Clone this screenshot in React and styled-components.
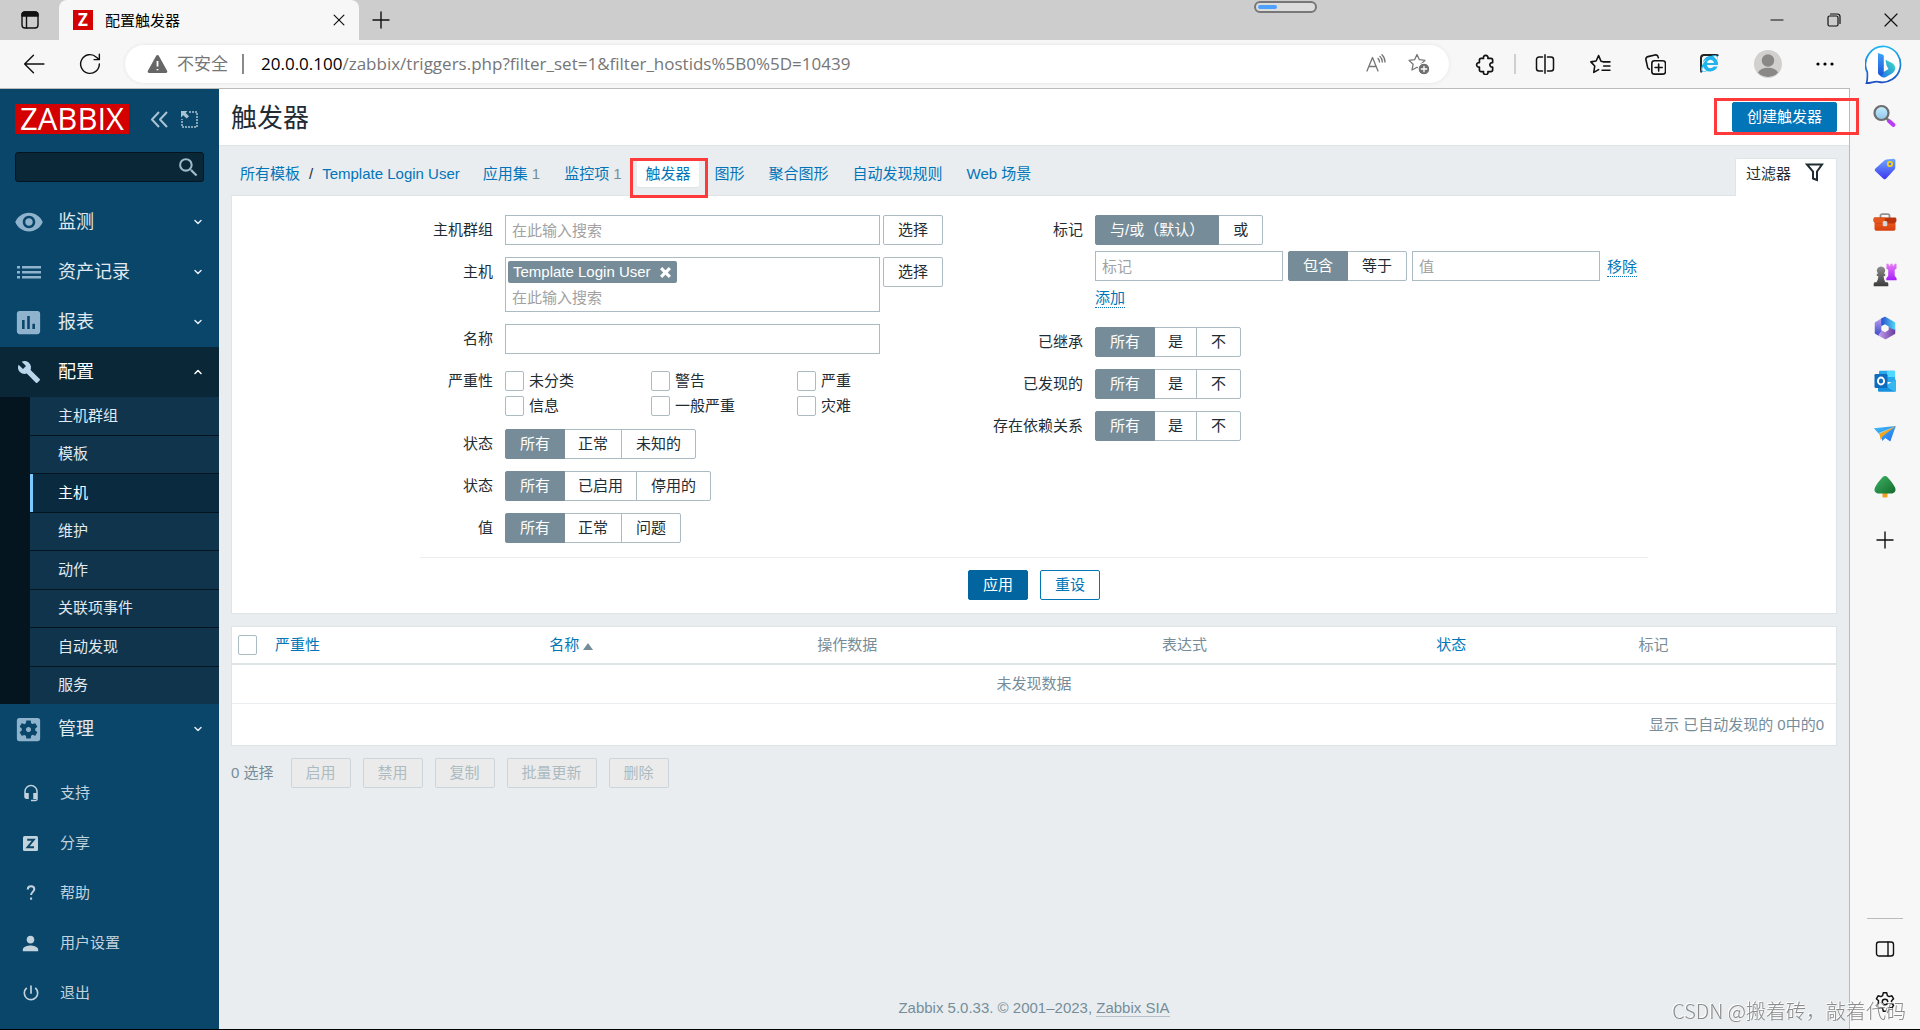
import React, { useState } from "react";
import styled, { createGlobalStyle, css } from "styled-components";
import {
  MdVisibility,
  MdBuild,
  MdAssessment,
  MdSettingsApplications,
  MdHeadsetMic,
  MdPerson,
  MdPowerSettingsNew,
  MdSearch,
} from "react-icons/md";
import { FaInternetExplorer } from "react-icons/fa";

const uiFont = `"Liberation Sans", Arial, "Noto Sans CJK SC", sans-serif`;
const chromeFont = `"Open Sans", "Noto Sans CJK SC", sans-serif`;

const color = {
  link: "#0275b8",
  text: "#1f2c33",
  grey: "#768d99",
  border: "#acbbc2",
  line: "#dfe4e7",
  page: "#e9edf0",
  side: "#0a466a",
  chrome: "#f7f7f7",
};

const Global = createGlobalStyle`
  *, *::before, *::after { box-sizing: border-box; }
  body { margin: 0; font: 15px/20px ${uiFont}; color: ${color.text}; background: ${color.page}; }
  button, input { font: inherit; color: inherit; margin: 0; }
  button { cursor: pointer; }
  a { color: ${color.link}; text-decoration: none; }
  ul { list-style: none; margin: 0; padding: 0; }
  svg { display: block; flex: none; }
`;

/* ---------- browser window ---------- */

const Window = styled.div`
  display: flex;
  flex-direction: column;
  min-height: 100vh;
  border-bottom: 1px solid #000;
`;

const TitleBar = styled.header`
  position: relative;
  display: flex;
  align-items: flex-end;
  height: 40px;
  background: #cdcdcd;
  font-family: ${chromeFont};
`;

const BareButton = styled.button`
  display: flex;
  align-items: center;
  justify-content: center;
  width: ${(p) => p.$w || 32}px;
  height: ${(p) => p.$h || 32}px;
  padding: 0;
  border: 0;
  background: none;
  color: ${(p) => p.$color || "#111"};
`;

const BrowserTab = styled.div`
  display: flex;
  align-items: center;
  gap: 12px;
  width: 300px;
  height: 40px;
  padding: 0 4px 0 14px;
  border-radius: 8px 8px 0 0;
  background: ${color.chrome};
  color: #000;
`;

const TabTitle = styled.span`
  flex: 1;
`;

const Favicon = styled.span`
  display: flex;
  align-items: center;
  justify-content: center;
  width: 20px;
  height: 20px;
  background: #d40000;
  color: #fff;
  font: bold 17px/20px "Open Sans", sans-serif;
`;

const WindowButtons = styled.div`
  display: flex;
  margin-left: auto;
`;

const LoadPill = styled.div`
  position: absolute;
  top: 1px;
  left: 1254px;
  width: 63px;
  height: 12px;
  padding: 2px;
  border: 2px solid #777;
  border-radius: 6px;
  background: #dcdcdc;

  &::before {
    content: "";
    display: block;
    width: 19px;
    height: 4px;
    border-radius: 2px;
    background: #4ea1ff;
  }
`;

const WindowBody = styled.div`
  display: flex;
  flex: 1;
`;

const Browser = styled.div`
  display: flex;
  flex-direction: column;
  flex: 1;
  min-width: 0;
`;

const Toolbar = styled.div`
  display: flex;
  align-items: center;
  height: 48px;
  padding-left: 18px;
  background: ${color.chrome};
  font-family: ${chromeFont};
`;

const AddressBar = styled.div`
  display: flex;
  align-items: center;
  flex: 1;
  height: 38px;
  margin: 0 20px 0 19px;
  padding: 0 12px 0 22px;
  border-radius: 19px;
  background: #fff;
  box-shadow: 0 0 4px rgba(0, 0, 0, 0.08);
  font-size: 17px;
  color: #767676;
`;

const Warning = styled.span`
  display: flex;
  align-items: center;
  gap: 9px;
  padding-right: 14px;
  margin-right: 17px;
  border-right: 2px solid #8a8a8a;
  font-size: 17px;
  line-height: 20px;
`;

const Url = styled.span`
  flex: 1;
  b {
    font-weight: 400;
    color: #000;
  }
`;

const ToolGroup = styled.div`
  display: flex;
  align-items: center;
  gap: ${(p) => p.$gap || 0}px;
`;

const ToolSeparator = styled.i`
  width: 2px;
  height: 20px;
  margin-left: 13px;
  background: #cfcfcf;
`;

const PageArea = styled.div`
  display: flex;
  flex: 1;
  border-top: 1px solid #bbb;
  border-right: 1px solid #bbb;
`;

const Rail = styled.aside`
  display: flex;
  flex-direction: column;
  align-items: center;
  width: 70px;
  padding-bottom: 1px;
  background: ${color.chrome};
`;

const RailButton = styled(BareButton)`
  width: 48px;
  height: 53px;
`;

const BingButton = styled(BareButton)`
  width: 48px;
  height: 49px;
`;

const RailFoot = styled.div`
  display: flex;
  flex-direction: column;
  align-items: center;
  margin-top: auto;
  padding-top: 3px;
  border-top: 1px solid #bbb;
  width: 36px;
`;

/* ---------- side menu ---------- */

const SideMenu = styled.nav`
  display: flex;
  flex-direction: column;
  width: 219px;
  background: ${color.side};
  color: #e0eaf0;
`;

const Brand = styled.div`
  display: flex;
  align-items: center;
  padding: 15px 0 0 15px;
  color: #a9c3d3;
`;

const Logo = styled.a`
  display: block;
  width: 114px;
  height: 30px;
  margin-right: 19px;
  background: #d40000;
  color: #fff;
  font: 31px/29px "Open Sans", sans-serif;
  text-align: center;
`;

const SideSearch = styled.label`
  display: flex;
  align-items: center;
  height: 30px;
  margin: 18px 15px 15px;
  padding-right: 2px;
  border: 1px solid #04151f;
  border-radius: 3px;
  background: #0a2737;
  color: #9db9ca;

  input {
    flex: 1;
    min-width: 0;
    padding: 0 8px;
    border: 0;
    outline: 0;
    background: none;
  }
`;

const MenuLink = styled.a`
  display: flex;
  align-items: center;
  gap: 14px;
  height: 50px;
  padding: 0 17px 0 13px;
  font-size: 18px;
  color: ${(p) => (p.$open ? "#fff" : "#e0eaf0")};
  background: ${(p) => (p.$open ? "#0a2737" : "transparent")};

  span {
    flex: 1;
  }
`;

const IconCell = styled.i`
  display: flex;
  align-items: center;
  justify-content: center;
  width: 31px;
  color: ${(p) => p.$color || "#8fb3cd"};
`;

const SubMenu = styled.ul`
  display: grid;
  grid-auto-rows: 1fr;
  height: 307px;
  border-left: 30px solid #04151f;
  background: #04151f;
  row-gap: 1px;
`;

const SubLink = styled.a`
  display: flex;
  align-items: center;
  height: 100%;
  padding-left: 25px;
  border-left: 3px solid ${(p) => (p.$current ? "#7cc9ff" : "#0f344c")};
  background: ${(p) => (p.$current ? "#0a2a3f" : "#0f344c")};
  color: ${(p) => (p.$current ? "#fff" : "#e0eaf0")};
`;

const UserMenu = styled.ul`
  margin-top: 14px;
`;

const UserLink = styled.a`
  display: flex;
  align-items: center;
  gap: 14px;
  height: 50px;
  padding-left: 15px;
  color: #c3d3dd;
`;

/* ---------- page ---------- */

const Main = styled.main`
  display: flex;
  flex-direction: column;
  flex: 1;
  min-width: 0;
  background: ${color.page};
`;

const PageHeader = styled.header`
  display: flex;
  align-items: center;
  justify-content: space-between;
  height: 57px;
  padding: 0 12px;
  border-bottom: 1px solid ${color.line};
  background: #fff;

  h1 {
    margin: 0;
    padding-top: 2px;
    font-size: 26px;
    font-weight: 400;
    line-height: 36px;
  }
`;

const Button = styled.button`
  height: 30px;
  padding: 0 14px;
  border: 1px solid ${color.link};
  border-radius: 2px;
  line-height: 26px;
  white-space: nowrap;
  background: #fff;
  color: ${color.link};

  ${(p) => p.$kind === "primary" && css`background: ${color.link}; color: #fff;`}
  ${(p) => p.$kind === "strong" && css`background: #02659f; border-color: #02659f; color: #fff;`}
  ${(p) => p.$kind === "grey" && css`border-color: ${color.border}; color: ${color.text};`}

  &:disabled {
    border-color: #ccd5d9;
    background: #ebebeb;
    color: #acbbc2;
    cursor: default;
  }
`;

const Marked = styled.div`
  position: relative;
  display: flex;

  &::after {
    content: "";
    position: absolute;
    z-index: 2;
    inset: ${(p) => p.$inset};
    border: 3px solid #ff3a3a;
    pointer-events: none;
  }
`;

const Content = styled.div`
  display: flex;
  flex-direction: column;
  flex: 1;
  padding: 12px;
`;

const NavRow = styled.div`
  display: flex;
  justify-content: space-between;
`;

const Crumbs = styled.nav`
  display: flex;
  align-items: center;
  height: 26px;
  margin-top: 3px;
  padding-left: 9px;
  gap: 9px;
`;

const Tabs = styled.ul`
  display: flex;
  margin-left: 6px;
  gap: 8px;
`;

const TabLink = styled.a`
  display: block;
  padding: 0 8px;
  border-radius: 2px;
  line-height: 26px;
  color: ${color.link};
  background: ${(p) => (p.$current ? "#fff" : "transparent")};
  box-shadow: ${(p) => (p.$current ? `0 1px 0 ${color.line}` : "none")};

  sup {
    padding-left: 4px;
    vertical-align: baseline;
    font-size: 15px;
    line-height: 20px;
    color: ${color.grey};
  }
`;

const FilterTab = styled.button`
  display: flex;
  align-items: flex-start;
  gap: 14px;
  height: 38px;
  margin-bottom: -1px;
  padding: 4px 12px 0 10px;
  border: 1px solid ${color.line};
  border-bottom: 0;
  border-radius: 2px 2px 0 0;
  line-height: 22px;
  background: #fff;
  z-index: 1;
`;

const FilterPanel = styled.form`
  padding: 19px 12px 13px;
  border: 1px solid ${color.line};
  background: #fff;
`;

const FilterInner = styled.div`
  width: fit-content;
  margin: 0 auto;
  min-width: 1228px;
`;

const FilterColumns = styled.div`
  display: flex;
  gap: 50px;
  padding-bottom: 14px;
  border-bottom: 1px solid #ebeef0;
`;

const FieldGrid = styled.div`
  display: grid;
  grid-template-columns: ${(p) => p.$label}px auto;
  gap: 12px;
  align-content: start;
  justify-content: start;
`;

const FieldLabel = styled.label`
  line-height: 30px;
  text-align: right;
  white-space: nowrap;
`;

const FieldRow = styled.div`
  display: flex;
  align-items: flex-start;
  gap: ${(p) => p.$gap || 3}px;
`;

const FieldStack = styled.div`
  display: flex;
  flex-direction: column;
  align-items: flex-start;
  gap: 6px;
  min-height: 100px;
`;

const TextInput = styled.input`
  width: ${(p) => p.$w}px;
  height: 30px;
  padding: 0 6px;
  border: 1px solid ${color.border};
  outline: 0;
  background: #fff;

  &::placeholder {
    color: #a2a2a2;
    opacity: 1;
  }
`;

const MultiSelect = styled.div`
  width: 375px;
  height: 55px;
  padding: 3px 2px 0;
  border: 1px solid ${color.border};

  input {
    width: 100%;
    height: 28px;
    padding: 0 4px;
    border: 0;
    outline: 0;
    background: none;
  }

  input::placeholder {
    color: #a2a2a2;
    opacity: 1;
  }
`;

const Tag = styled.span`
  display: flex;
  align-items: center;
  gap: 9px;
  width: fit-content;
  height: 22px;
  padding: 0 5px;
  border-radius: 2px;
  background: ${color.grey};
  color: #fff;
`;

const Checks = styled.div`
  display: grid;
  grid-template-columns: repeat(3, 146px);
  gap: 5px 0;
  width: 375px;
  padding: 5px 0 1px;
`;

const Checkbox = styled.input`
  appearance: none;
  width: 19px;
  height: 20px;
  border: 1px solid ${color.border};
  border-radius: 2px;
  background: #fff;

  &:checked {
    background: ${color.grey};
  }
`;

const CheckLabel = styled.label`
  display: flex;
  align-items: center;
  gap: 5px;
`;

const Segments = styled.div`
  display: flex;
  height: 30px;

  label {
    position: relative;
    display: flex;
    align-items: center;
    margin-left: -1px;
    padding: 0 13px;
    border: 1px solid ${color.border};
    background: #fff;
    cursor: pointer;
    white-space: nowrap;
  }

  label:first-child {
    margin-left: 0;
    border-radius: 2px 0 0 2px;
    padding: 0 14px;
  }

  label:last-child {
    border-radius: 0 2px 2px 0;
    padding: 0 14px;
  }

  label:has(input:checked) {
    background: ${color.grey};
    border-color: ${color.grey};
    color: #fff;
    z-index: 1;
  }

  input {
    position: absolute;
    inset: 0;
    opacity: 0;
  }
`;

const DottedLink = styled.a`
  margin-top: ${(p) => (p.$inline ? "6px" : "1px")};
  margin-left: ${(p) => (p.$inline ? "2px" : "0")};
  border-bottom: 1px dotted ${color.link};
  line-height: 19px;
`;

const FilterActions = styled.div`
  display: flex;
  justify-content: center;
  gap: 12px;
  padding-top: 12px;
`;

const DataTable = styled.table`
  width: 100%;
  margin-top: 12px;
  border: 1px solid ${color.line};
  border-spacing: 0;
  table-layout: fixed;
  background: #fff;

  th,
  td {
    padding: 0 6px;
    font-weight: 400;
    text-align: left;
    color: ${color.grey};
  }

  th {
    height: 38px;
    border-bottom: 2px solid ${color.line};
  }

  tbody td {
    height: 39px;
    border-bottom: 1px solid #ebeef0;
    text-align: center;
  }

  tfoot td {
    height: 41px;
    padding-right: 12px;
    text-align: right;
  }
`;

const HeadCheck = styled.th`
  width: 37px;
`;

const HeadCell = styled.th`
  width: ${(p) => p.$w};
`;

const SortArrow = styled.i`
  display: inline-block;
  margin-left: 4px;
  border: 5px solid transparent;
  border-top: 0;
  border-bottom: 7px solid ${color.grey};
`;

const ActionBar = styled.div`
  display: flex;
  align-items: center;
  gap: 12px;
  margin-top: 12px;
  color: ${color.grey};

  span {
    margin-right: 5px;
  }
`;

const Footer = styled.footer`
  margin-top: auto;
  line-height: 18px;
  text-align: center;
  color: ${color.grey};

  a {
    border-bottom: 1px solid #b5c2c9;
    color: inherit;
  }
`;

const Watermark = styled.div`
  position: fixed;
  right: 14px;
  bottom: 5px;
  z-index: 5;
  font: 300 20px/28px "Noto Sans CJK SC", sans-serif;
  color: #8b8b8b;
  text-shadow: -1px -1px 0 #fff;
  pointer-events: none;
`;

/* ---------- drawings ---------- */

const Line = ({ s = 20, w = 1.5, box = 20, children, ...rest }) => (
  <svg width={s} height={s} viewBox={`0 0 ${box} ${box}`} fill="none" stroke="currentColor" strokeWidth={w} strokeLinecap="round" strokeLinejoin="round" aria-hidden="true" {...rest}>
    {children}
  </svg>
);

const IconWorkspace = () => (
  <Line w={1.4}>
    <rect x="2" y="2" width="16" height="16" rx="3" />
    <path d="M2 5a3 3 0 0 1 3-3h10a3 3 0 0 1 3 3v1H2z" fill="currentColor" />
    <path d="M6.5 6v12" />
  </Line>
);
const IconPlus = ({ s = 20 }) => <Line s={s} w={1.4}><path d="M10 2v16M2 10h16" /></Line>;
const IconClose = ({ s = 14 }) => <Line s={s} w={1.7}><path d="M3 3l14 14M17 3L3 17" /></Line>;
const IconBack = () => <Line s={22} w={1.3}><path d="M19 10H1.500M9.500 2L1.500 10l8 8" /></Line>;
const IconReload = () => <Line s={22} w={1.3}><path d="M18.500 10a8.500 8.500 0 1 1-2.700-6.200L18.500 6M18.500 1.200V6h-4.800" /></Line>;
const IconWarning = () => (
  <svg width="21" height="20" viewBox="0 0 21 20" aria-hidden="true">
    <path d="M9.200 1.700a1.500 1.500 0 0 1 2.600 0l8.300 15a1.500 1.500 0 0 1-1.300 2.300H2.200a1.500 1.500 0 0 1-1.300-2.300z" fill="#666" />
    <path d="M10.500 7v5.500M10.500 15v1.200" stroke="#fff" strokeWidth="1.800" />
  </svg>
);
const IconRead = () => (
  <Line w={1.3}>
    <path d="M1 17L6.500 3.500 12 17M3 12.500h7" />
    <path d="M12 4.500c1 1 1.500 2 1.500 3.500M14 2.500c1.600 1.500 2.300 3.200 2.300 5.500M16 .8c2 2 3 4.500 3 7.200" />
  </Line>
);
const star = "M9 1.500l2.400 5.200 5.600.7-4.100 3.900 1.100 5.700L9 14.300 4 17l1.100-5.700L1 7.400l5.600-.7z";
const IconFavAdd = () => (
  <Line s={22} w={1.3} box={22}>
    <path d={star} />
    <circle cx="16" cy="16" r="5.800" fill="#707070" stroke="#fff" strokeWidth="1" />
    <path d="M16 13.300v5.400M13.300 16h5.400" stroke="#fff" />
  </Line>
);
const IconPuzzle = () => (
  <Line s={21} w={1.6}>
    <path d="M5.800 4.200h2.300a2.200 2.200 0 1 1 4.200 0h2.900a1.600 1.600 0 0 1 1.600 1.600v2.400a2.200 2.200 0 1 0 0 4.300v2.700a1.600 1.600 0 0 1-1.600 1.600h-2.900a2.200 2.200 0 1 1-4.200 0H5.800a1.600 1.600 0 0 1-1.600-1.600v-2.700a2.200 2.200 0 1 1 0-4.300V5.800a1.600 1.600 0 0 1 1.600-1.600z" />
  </Line>
);
const IconSplit = () => (
  <Line w={1.500}>
    <path d="M7.500 3H4a2.500 2.500 0 0 0-2.500 2.500v9A2.500 2.500 0 0 0 4 17h3.500M12.500 3H16a2.500 2.500 0 0 1 2.500 2.500v9A2.500 2.500 0 0 1 16 17h-3.500M10 .8v18.400" />
  </Line>
);
const IconFavorites = () => (
  <Line s={21} w={1.500}>
    <path d="M12.500 7.300l-2-.4L8.200 1.500 5.800 6.700l-5 .8 3.700 4-.9 6 4.600-2.600M12.500 7.500H19M13 11.500h6M11.500 15.500H19" />
  </Line>
);
const IconCollections = () => (
  <Line s={21} w={1.500}>
    <path d="M4.200 14.500a2.500 2.500 0 0 1-1.700-1.800L.9 5.500a2.500 2.500 0 0 1 1.900-3L9.500.9a2.500 2.500 0 0 1 3 1.900l.2.700" />
    <rect x="6.500" y="6.500" width="13" height="12.700" rx="2.500" />
    <path d="M13 9.500v6.800M9.600 12.900h6.800" />
  </Line>
);
const IeFrame = styled.span`
  display: flex;
  align-items: flex-end;
  justify-content: flex-end;
  width: 20px;
  height: 20px;
  border: 2px solid #222;
  border-right-color: transparent;
  border-bottom-color: transparent;
  border-radius: 4px;
  color: #1fb4ee;
`;
const IconAvatar = () => (
  <svg width="28" height="28" viewBox="0 0 28 28" aria-hidden="true">
    <circle cx="14" cy="14" r="14" fill="#d2d0ce" />
    <circle cx="14" cy="10.500" r="6.200" fill="#8a8886" />
    <path d="M4 22.500c1.500-3 5-4.700 10-4.700s8.500 1.700 10 4.700a13.500 13.500 0 0 1-20 0z" fill="#8a8886" />
  </svg>
);
const IconDots = () => (
  <svg width="18" height="4" viewBox="0 0 18 4" aria-hidden="true"><circle cx="2" cy="2" r="1.600" /><circle cx="9" cy="2" r="1.600" /><circle cx="16" cy="2" r="1.600" /></svg>
);

const Grad = ({ id, from, to, x2 = 0, y2 = 1 }) => (
  <linearGradient id={id} x1="0" y1="0" x2={x2} y2={y2}><stop stopColor={from} /><stop offset="1" stopColor={to} /></linearGradient>
);

const IconBing = () => (
  <svg width="40" height="40" viewBox="0 0 40 40" aria-hidden="true">
    <defs>
      <Grad id="bingRing" from="#1fb5f0" to="#1d4fc4" />
      <Grad id="bingStem" from="#3fa2f7" to="#1a56d6" />
      <linearGradient id="bingBowl" x1="1" y1="0" x2="0" y2="1"><stop stopColor="#3fe0c5" /><stop offset="1" stopColor="#1d6fe8" /></linearGradient>
    </defs>
    <path d="M20.500 1.500a18 18 0 1 1-7 35.300c-4-.8-7 1.200-12 1.400 1.300-4 1-8 .8-11A18 18 0 0 1 20.500 1.500z" fill="#fff" stroke="url(#bingRing)" strokeWidth="1.700" />
    <path d="M20.500 14.800l6.500 3.200c4.500 2.500 4 8.500 0 10.500l-6 3.500c-2.500 1.200-5.500.5-6.500-2.500l9-5.500-2-3.500z" fill="url(#bingBowl)" />
    <path d="M13 8l5 1.800c.5.200.8.600.8 1.200v15.500c0 2.500-1.300 4-3 4-1.600 0-2.800-1.200-2.800-3z" fill="url(#bingStem)" />
  </svg>
);
const RailSvg = ({ children }) => <svg width="24" height="24" viewBox="0 0 24 24" aria-hidden="true">{children}</svg>;
const IconLens = () => (
  <RailSvg>
    <defs><Grad id="lens" from="#c7f0ff" to="#8fc4ea" /></defs>
    <path d="M16 17l4.500 4" stroke="#b93df2" strokeWidth="4" strokeLinecap="round" />
    <path d="M13.500 14.500l2 1.800" stroke="#777" strokeWidth="2.500" />
    <circle cx="8.500" cy="9" r="7" fill="url(#lens)" stroke="#6d6d6d" strokeWidth="2.200" />
  </RailSvg>
);
const IconTag = () => (
  <RailSvg>
    <defs><Grad id="tag" from="#6fa8ff" to="#3b35f0" /></defs>
    <path d="M13.500 2.500l7-.8c1.200 0 1.900.8 1.900 1.900l-.2 7.500c0 .6-.3 1-.7 1.500l-8.300 9c-.8.800-2 .8-2.800.1l-8-7.500c-.8-.8-.9-2 0-2.800l9.500-8.300c.5-.4 1-.6 1.600-.6z" fill="url(#tag)" />
    <circle cx="17" cy="7" r="2.200" fill="#4b7bff" stroke="#f7d117" strokeWidth="1.800" />
  </RailSvg>
);
const IconToolbox = () => (
  <RailSvg>
    <defs><Grad id="box" from="#f0591e" to="#d3400f" /></defs>
    <path d="M7.500 8V5.800c0-1 .7-1.700 1.700-1.700h5.600c1 0 1.700.7 1.700 1.700V8" fill="none" stroke="#909090" strokeWidth="1.800" />
    <path d="M1.500 12h21v7a1.800 1.800 0 0 1-1.800 1.800H3.300A1.800 1.800 0 0 1 1.500 19z" fill="url(#box)" />
    <path d="M2 7.500h20a1.400 1.400 0 0 1 1.400 1.400v2.600L21 13.500H3L.6 11.500V8.900A1.400 1.400 0 0 1 2 7.500z" fill="#b8350c" />
    <path d="M2 7.500h10v5.700H3L.6 11.500V8.900A1.400 1.400 0 0 1 2 7.500z" fill="#e4571c" />
    <rect x="9.700" y="11" width="4.600" height="5.200" rx="1.500" fill="#d6d6d6" />
  </RailSvg>
);
const IconChess = () => (
  <RailSvg>
    <defs>
      <Grad id="pawn" from="#8d8d8d" to="#3c3c3c" />
      <Grad id="rook" from="#e77bf5" to="#a51dfa" />
    </defs>
    <path d="M13.500.8h2.200v1.700h1.700V.8h2.200v1.700h1.700V.8h2.200v5l-1.800 1v6l1.900 2.500v2H13.300v-2l1.900-2.500v-6l-1.700-1z" fill="url(#rook)" />
    <path d="M8 3.500a4.200 4.200 0 0 1 3 7.200h1.200v2.200h-1.500c0 2.500.7 4.600 1.900 6.400h1.200c1 0 1.500.7 1.500 1.600v2.300H.7v-2.300c0-.9.500-1.600 1.500-1.600h1.200c1.200-1.800 1.900-3.900 1.900-6.400H3.800v-2.200H5a4.200 4.200 0 0 1 3-7.200z" fill="url(#pawn)" />
  </RailSvg>
);
const IconOffice = () => (
  <RailSvg>
    <defs>
      <Grad id="offA" from="#b79aec" to="#3f4fc9" />
      <Grad id="offB" from="#2a55d0" to="#4fd0f2" x2={1} y2={0} />
      <Grad id="offC" from="#c39af0" to="#6a3f9e" x2={1} y2={0} />
    </defs>
    <g strokeLinejoin="round" strokeWidth="1.500">
      <path d="M9 3L2.500 7v10l3.500 2 2-2.500V9.500z" fill="url(#offA)" stroke="url(#offA)" />
      <path d="M21.500 13.500v3.800L12.500 22.500 6 19.200l3-3.700 3 1 4-3v-2z" fill="url(#offC)" stroke="url(#offC)" />
      <path d="M9 3l3-1.500L21.500 7v6l-5.700-2.500L12 8l-3 1z" fill="url(#offB)" stroke="url(#offB)" />
    </g>
    <path d="M12 8.300l3.600 2.200v3.600L12 16.300l-3.600-2.200v-3.600z" fill={color.chrome} />
  </RailSvg>
);
const IconOutlook = () => (
  <RailSvg>
    <path d="M7 1.800h14a1 1 0 0 1 1 1V13H6V2.800a1 1 0 0 1 1-1z" fill="#28a8ea" />
    <path d="M14 1.800h7a1 1 0 0 1 1 1V8h-8z" fill="#50d9ff" />
    <path d="M22.800 10.500v11.200a1 1 0 0 1-1 1H6a1 1 0 0 1-1-1V10.500L14 17z" fill="#1490df" />
    <path d="M22.800 10.500L12 17l9.800 5.700a1 1 0 0 0 1-1z" fill="#35b8f1" />
    <rect x="1.500" y="5" width="13" height="14" rx="1.300" fill="#0f6cbd" />
    <ellipse cx="8" cy="12" rx="3.100" ry="3.500" fill="none" stroke="#fff" strokeWidth="1.900" />
  </RailSvg>
);
const IconPlane = () => (
  <RailSvg>
    <defs><Grad id="plane" from="#43c1f5" to="#1f6ff0" x2={1} /></defs>
    <path d="M.8 6.200L22.800 4l-5.500 15.500-5.100-3.500-2.700 3-2.500-6z" fill="url(#plane)" />
    <path d="M22.800 4L7.500 12.500l-2-1.600z" fill="#8edcff" />
    <path d="M22.800 4L6.500 11.800l1.200 6.200 2-3.700z" fill="#f5a51b" />
  </RailSvg>
);
const IconTree = () => (
  <RailSvg>
    <defs><Grad id="tree" from="#3fb364" to="#126b2c" x2={1} /></defs>
    <rect x="9.500" y="17" width="5" height="5.500" rx="1" fill="#f0a01c" />
    <path d="M9.500 2.200c1.500-1.500 3.500-1.500 5 0 3 3 6 7 7.500 10.300 1.500 3.500-.5 6-4 6H6c-3.500 0-5.500-2.500-4-6C3.500 9.200 6.500 5.200 9.500 2.200z" fill="url(#tree)" />
  </RailSvg>
);
const IconPanel = () => (
  <Line s={20} w={1.400}><rect x="1.500" y="3" width="17" height="14" rx="2.500" /><path d="M13 3v14" /></Line>
);
const IconGear = () => (
  <Line s={22} w={1.600} box={24}>
    <path d="M10.100 2h3.800l.7 3 1.900 1.100 3-.9 1.900 3.300-2.300 2.200v2.600l2.300 2.200-1.900 3.300-3-.9-1.900 1.100-.7 3h-3.800l-.7-3-1.900-1.100-3 .9-1.900-3.300 2.300-2.200v-2.600L2.600 8.500l1.900-3.300 3 .9L9.400 5z" />
    <circle cx="12" cy="12" r="3" />
  </Line>
);

const IconList = () => (
  <svg width="24" height="15" viewBox="0 0 24 15" fill="currentColor" aria-hidden="true">
    <path d="M0 1h3v2.500H0zM5 1h19v2.500H5zM0 6h3v2.500H0zM5 6h19v2.500H5zM0 11h3v2.500H0zM5 11h19v2.500H5z" />
  </svg>
);
const IconZ = () => (
  <svg width="15" height="15" viewBox="0 0 15 15" aria-hidden="true">
    <rect width="15" height="15" rx="1.500" fill="#c3d3dd" />
    <path d="M4.200 3.800h6.500L4.600 11.200h6.400" fill="none" stroke={color.side} strokeWidth="2" />
  </svg>
);
const IconHelp = () => (
  <Line s={16} w={2} box={16} strokeLinecap="butt"><path d="M4.800 4.500c0-2 1.400-3.200 3.300-3.200s3.200 1.200 3.200 2.800c0 2.600-3.200 3-3.200 6M8.100 12.500v2.300" /></Line>
);
const IconCollapse = () => (
  <Line s={19} w={2} box={19} strokeLinecap="butt"><path d="M9 2L2 9.500 9 17M17 2l-7 7.500 7 7.500" /></Line>
);
const IconDetach = () => (
  <svg width="17" height="17" viewBox="0 0 17 17" aria-hidden="true">
    <path d="M8 1h8v15H1V8" fill="none" stroke="currentColor" strokeWidth="1.500" strokeDasharray="2 1" />
    <path d="M0 0h6.500L4.700 1.900 8 5.200 5.700 7.500 2.200 4.200 0 6.500z" fill="currentColor" />
  </svg>
);
const Chevron = ({ up }) => (
  <Line s={8} w={1.500} box={8}><path d={up ? "M1 5.500l3-3 3 3" : "M1 2.500l3 3 3-3"} /></Line>
);
const IconFunnel = () => (
  <Line s={19} w={2} box={19} strokeLinecap="butt" strokeLinejoin="miter"><path d="M2 1.500h15l-5 7v8.500l-4-1.500V8.500z" /></Line>
);
const IconTagClose = () => <Line s={11} w={2.800} box={10} strokeLinecap="butt"><path d="M1 1l8 8M9 1L1 9" /></Line>;

/* ---------- parts ---------- */

function Segmented({ name, label, options }) {
  const [value, setValue] = useState(options[0]);
  return (
    <Segments role="radiogroup" aria-label={label}>
      {options.map((o) => (
        <label key={o}>
          <input type="radio" name={name} checked={value === o} onChange={() => setValue(o)} />
          {o}
        </label>
      ))}
    </Segments>
  );
}

function SegmentField({ name, label, options }) {
  return (
    <>
      <FieldLabel as="span">{label}</FieldLabel>
      <FieldRow><Segmented name={name} label={label} options={options} /></FieldRow>
    </>
  );
}

const subItems = ["主机群组", "模板", "主机", "维护", "动作", "关联项事件", "自动发现", "服务"];
const userItems = [
  ["支持", <MdHeadsetMic size={18} />],
  ["分享", <IconZ />],
  ["帮助", <IconHelp />],
  ["用户设置", <MdPerson size={23} />],
  ["退出", <MdPowerSettingsNew size={20} />],
];
const railItems = [
  ["搜索", IconLens],
  ["购物", IconTag],
  ["工具", IconToolbox],
  ["游戏", IconChess],
  ["Microsoft 365", IconOffice],
  ["Outlook", IconOutlook],
  ["Drop", IconPlane],
  ["树", IconTree],
  ["自定义", IconPlus],
];

function MenuItem({ icon, text, open }) {
  return (
    <MenuLink href="#" $open={open}>
      <IconCell $color={open ? "#b9d6ea" : undefined}>{icon}</IconCell>
      <span>{text}</span>
      <Chevron up={open} />
    </MenuLink>
  );
}

function Sidebar() {
  return (
    <SideMenu>
      <Brand>
        <Logo href="#">ZABBIX</Logo>
        <BareButton $w={22} $h={22} $color="#a9c3d3" aria-label="收起"><IconCollapse /></BareButton>
        <BareButton $w={38} $h={22} $color="#a9c3d3" aria-label="隐藏"><IconDetach /></BareButton>
      </Brand>
      <SideSearch>
        <input type="search" aria-label="搜索" />
        <MdSearch size={25} />
      </SideSearch>
      <MenuItem icon={<MdVisibility size={30} />} text="监测" />
      <MenuItem icon={<IconList />} text="资产记录" />
      <MenuItem icon={<MdAssessment size={31} />} text="报表" />
      <MenuItem icon={<MdBuild size={24} />} text="配置" open />
      <SubMenu>
        {subItems.map((t) => (
          <li key={t}><SubLink href="#" $current={t === "主机"}>{t}</SubLink></li>
        ))}
      </SubMenu>
      <MenuItem icon={<MdSettingsApplications size={31} />} text="管理" />
      <UserMenu>
        {userItems.map(([t, icon]) => (
          <li key={t}><UserLink href="#"><IconCell $color="#c3d3dd">{icon}</IconCell>{t}</UserLink></li>
        ))}
      </UserMenu>
    </SideMenu>
  );
}

function Filter() {
  return (
    <FilterPanel onSubmit={(e) => e.preventDefault()}>
      <FilterInner>
        <FilterColumns>
          <FieldGrid $label={73}>
            <FieldLabel htmlFor="groups">主机群组</FieldLabel>
            <FieldRow>
              <TextInput id="groups" $w={375} placeholder="在此输入搜索" />
              <Button type="button" $kind="grey">选择</Button>
            </FieldRow>
            <FieldLabel htmlFor="hosts">主机</FieldLabel>
            <FieldRow>
              <MultiSelect>
                <Tag>Template Login User<BareButton type="button" $w={12} $h={20} $color="#fff" aria-label="移除模板"><IconTagClose /></BareButton></Tag>
                <input id="hosts" placeholder="在此输入搜索" />
              </MultiSelect>
              <Button type="button" $kind="grey">选择</Button>
            </FieldRow>
            <FieldLabel htmlFor="name">名称</FieldLabel>
            <FieldRow><TextInput id="name" $w={375} /></FieldRow>
            <FieldLabel as="span">严重性</FieldLabel>
            <Checks>
              {["未分类", "警告", "严重", "信息", "一般严重", "灾难"].map((t) => (
                <CheckLabel key={t}><Checkbox type="checkbox" />{t}</CheckLabel>
              ))}
            </Checks>
            <SegmentField name="state" label="状态" options={["所有", "正常", "未知的"]} />
            <SegmentField name="status" label="状态" options={["所有", "已启用", "停用的"]} />
            <SegmentField name="value" label="值" options={["所有", "正常", "问题"]} />
          </FieldGrid>
          <FieldGrid $label={90}>
            <FieldLabel as="span">标记</FieldLabel>
            <FieldStack>
              <Segmented name="evaltype" label="标记" options={["与/或（默认）", "或"]} />
              <FieldRow $gap={5}>
                <TextInput $w={188} placeholder="标记" aria-label="标记" />
                <Segmented name="operator" label="运算符" options={["包含", "等于"]} />
                <TextInput $w={188} placeholder="值" aria-label="值" />
                <DottedLink href="#" $inline>移除</DottedLink>
              </FieldRow>
              <DottedLink href="#">添加</DottedLink>
            </FieldStack>
            <SegmentField name="inherited" label="已继承" options={["所有", "是", "不"]} />
            <SegmentField name="discovered" label="已发现的" options={["所有", "是", "不"]} />
            <SegmentField name="dependent" label="存在依赖关系" options={["所有", "是", "不"]} />
          </FieldGrid>
        </FilterColumns>
        <FilterActions>
          <Button type="submit" $kind="strong">应用</Button>
          <Button type="reset">重设</Button>
        </FilterActions>
      </FilterInner>
    </FilterPanel>
  );
}

function TriggerTable() {
  return (
    <DataTable>
      <thead>
        <tr>
          <HeadCheck><CheckLabel><Checkbox type="checkbox" aria-label="全选" /></CheckLabel></HeadCheck>
          <HeadCell $w="17.1%"><a href="#">严重性</a></HeadCell>
          <HeadCell $w="16.7%"><a href="#">名称<SortArrow /></a></HeadCell>
          <HeadCell $w="21.5%">操作数据</HeadCell>
          <HeadCell $w="17.1%">表达式</HeadCell>
          <HeadCell $w="12.6%"><a href="#">状态</a></HeadCell>
          <HeadCell $w="auto">标记</HeadCell>
        </tr>
      </thead>
      <tbody>
        <tr><td colSpan={7}>未发现数据</td></tr>
      </tbody>
      <tfoot>
        <tr><td colSpan={7}>显示 已自动发现的 0中的0</td></tr>
      </tfoot>
    </DataTable>
  );
}

const tabs = [["应用集", 1], ["监控项", 1], ["触发器"], ["图形"], ["聚合图形"], ["自动发现规则"], ["Web 场景"]];

function Page() {
  return (
    <Main>
      <PageHeader>
        <h1>触发器</h1>
        <Marked $inset="-4px -22px -3px -18px"><Button $kind="primary">创建触发器</Button></Marked>
      </PageHeader>
      <Content>
        <NavRow>
          <Crumbs>
            <a href="#">所有模板</a>
            <span>/</span>
            <a href="#">Template Login User</a>
            <Tabs>
              {tabs.map(([t, n]) => {
                const current = t === "触发器";
                const link = <TabLink href="#" $current={current}>{t}{n && <sup>{n}</sup>}</TabLink>;
                return <li key={t}>{current ? <Marked $inset="-3px -9px -11px -7px">{link}</Marked> : link}</li>;
              })}
            </Tabs>
          </Crumbs>
          <FilterTab type="button">过滤器<IconFunnel /></FilterTab>
        </NavRow>
        <Filter />
        <TriggerTable />
        <ActionBar>
          <span>0 选择</span>
          {["启用", "禁用", "复制", "批量更新", "删除"].map((t) => <Button key={t} disabled>{t}</Button>)}
        </ActionBar>
        <Footer>Zabbix 5.0.33. © 2001–2023, <a href="#">Zabbix SIA</a></Footer>
      </Content>
    </Main>
  );
}

export default function App() {
  return (
    <>
      <Global />
      <Window>
        <TitleBar>
          <BareButton $w={59} $h={40} aria-label="标签页操作"><IconWorkspace /></BareButton>
          <BrowserTab>
            <Favicon>Z</Favicon>
            <TabTitle>配置触发器</TabTitle>
            <BareButton aria-label="关闭标签页"><IconClose /></BareButton>
          </BrowserTab>
          <BareButton $w={43} $h={40} aria-label="新建标签页"><IconPlus /></BareButton>
          <LoadPill />
          <WindowButtons>
            <BareButton $w={57} $h={40} aria-label="最小化"><Line s={14} w={1.2} box={14}><path d="M1 7h12" /></Line></BareButton>
            <BareButton $w={57} $h={40} aria-label="还原">
              <Line s={14} w={1.2} box={14}><rect x="1" y="3" width="10" height="10" rx="1.500" /><path d="M3.500 1h7A2.500 2.500 0 0 1 13 3.500v7" /></Line>
            </BareButton>
            <BareButton $w={58} $h={40} aria-label="关闭"><Line s={14} w={1.2} box={14}><path d="M1 1l12 12M13 1L1 13" /></Line></BareButton>
          </WindowButtons>
        </TitleBar>
        <WindowBody>
          <Browser>
            <Toolbar>
              <ToolGroup $gap={24}>
                <BareButton aria-label="返回"><IconBack /></BareButton>
                <BareButton aria-label="刷新"><IconReload /></BareButton>
              </ToolGroup>
              <AddressBar>
                <Warning><IconWarning />不安全</Warning>
                <Url><b>20.0.0.100</b>/zabbix/triggers.php?filter_set=1&amp;filter_hostids%5B0%5D=10439</Url>
                <BareButton $w={50} $color="#767676" aria-label="大声朗读"><IconRead /></BareButton>
                <BareButton $w={36} $color="#767676" aria-label="添加收藏"><IconFavAdd /></BareButton>
              </AddressBar>
              <ToolGroup>
                <BareButton aria-label="扩展"><IconPuzzle /></BareButton>
                <ToolSeparator />
                <BareButton $w={58} aria-label="拆分屏幕"><IconSplit /></BareButton>
                <BareButton $w={52} aria-label="收藏夹"><IconFavorites /></BareButton>
                <BareButton $w={58} aria-label="集锦"><IconCollections /></BareButton>
                <BareButton $w={52} aria-label="IE 模式"><IeFrame><FaInternetExplorer size={17} /></IeFrame></BareButton>
                <BareButton $w={64} aria-label="个人资料"><IconAvatar /></BareButton>
                <BareButton $w={50} aria-label="更多"><IconDots /></BareButton>
              </ToolGroup>
            </Toolbar>
            <PageArea>
              <Sidebar />
              <Page />
            </PageArea>
          </Browser>
          <Rail>
            <BingButton aria-label="Bing"><IconBing /></BingButton>
            {railItems.map(([t, Icon]) => <RailButton key={t} aria-label={t}><Icon /></RailButton>)}
            <RailFoot>
              <RailButton aria-label="侧边栏"><IconPanel /></RailButton>
              <RailButton aria-label="设置"><IconGear /></RailButton>
            </RailFoot>
          </Rail>
        </WindowBody>
      </Window>
      <Watermark>CSDN @搬着砖，敲着代码</Watermark>
    </>
  );
}
